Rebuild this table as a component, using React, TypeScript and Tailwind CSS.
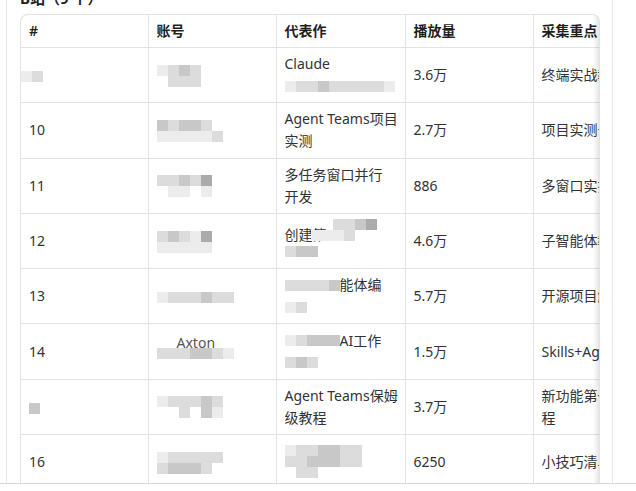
import React from "react";

// grey squares standing in for the mosaic-blurred bits of the screenshot
const shade: Record<string, string> = {
  ".": "bg-transparent",
  a: "bg-[#ececec]",
  b: "bg-[#dcdcdc]",
  c: "bg-[#c8c8c8]",
  d: "bg-[#ababab]",
};

const Pix = ({ rows, className = "" }: { rows: string[]; className?: string }) => (
  <div className={`inline-flex flex-col align-middle blur-[0.5px] ${className}`}>
    {rows.map((r, i) => (
      <div key={i} className="flex">
        {r.split("").map((ch, j) => (
          <span key={j} className={`h-[11px] w-[11px] ${shade[ch]}`} />
        ))}
      </div>
    ))}
  </div>
);

type Row = {
  no: React.ReactNode;
  account: React.ReactNode;
  work: React.ReactNode;
  plays: string;
  focus: React.ReactNode;
};

const rows: Row[] = [
  {
    no: <Pix rows={["ab"]} className="-ml-2" />,
    account: <Pix rows={["abcb", ".bbb"]} />,
    work: (
      <>
        <div>Claude</div>
        <div className="flex h-[22px] items-center">
          <Pix rows={["abbcbbbbba"]} className="rounded-full" />
        </div>
      </>
    ),
    plays: "3.6万",
    focus: "终端实战教程",
  },
  {
    no: "10",
    account: <Pix rows={["cbccb", "aaaaab"]} />,
    work: (
      <>
        <div>Agent Teams项目</div>
        <div>实测</div>
      </>
    ),
    plays: "2.7万",
    focus: "项目实测+拆解",
  },
  {
    no: "11",
    account: <Pix rows={["bbcbd", ".aa.a"]} />,
    work: (
      <>
        <div>多任务窗口并行</div>
        <div>开发</div>
      </>
    ),
    plays: "886",
    focus: "多窗口实操",
  },
  {
    no: "12",
    account: <Pix rows={["bcbad", "aaaaa"]} />,
    work: (
      <>
        <div className="flex items-center">
          <span className="-mb-[10px]">创建第</span>
          <Pix rows={["..bbcd", "aaab.."]} className="-ml-4" />
        </div>
        <div className="flex h-[22px] items-center">
          <Pix rows={["bcc"]} />
        </div>
      </>
    ),
    plays: "4.6万",
    focus: "子智能体教程",
  },
  {
    no: "13",
    account: <Pix rows={["abbbcbb"]} />,
    work: (
      <>
        <div className="flex items-center">
          <Pix rows={["bbbbc"]} />
          <span>能体编</span>
        </div>
        <div className="flex h-[22px] items-center">
          <Pix rows={["ab"]} />
        </div>
      </>
    ),
    plays: "5.7万",
    focus: "开源项目解读",
  },
  {
    no: "14",
    account: (
      <div className="relative inline-block w-[70px] align-middle">
        <span className="absolute left-[20px] -top-[9px] text-[#555]">Axton</span>
        <Pix rows={["bbbccba"]} />
      </div>
    ),
    work: (
      <>
        <div className="flex items-center">
          <Pix rows={["abccc"]} />
          <span>AI工作</span>
        </div>
        <div className="flex h-[22px] items-center">
          <Pix rows={["bcb"]} />
        </div>
      </>
    ),
    plays: "1.5万",
    focus: "Skills+Agent",
  },
  {
    no: <Pix rows={["c"]} />,
    account: <Pix rows={["abbbcb", "..b.ca"]} />,
    work: (
      <>
        <div>Agent Teams保姆</div>
        <div>级教程</div>
      </>
    ),
    plays: "3.7万",
    focus: (
      <>
        <div>新功能第一手教</div>
        <div>程</div>
      </>
    ),
  },
  {
    no: "16",
    account: <Pix rows={["abbbbb", "bcccb."]} />,
    work: <Pix rows={["abbccbb", "bbcccbb", ".bb.."]} />,
    plays: "6250",
    focus: "小技巧清单",
  },
];

const th =
  "border-r border-b border-[#e3e3e3] px-2 py-[5px] text-left font-semibold whitespace-nowrap text-[#1f1f1f]";
const td =
  "border-r border-b border-[#e3e3e3] px-2 py-[5.15px] align-middle whitespace-nowrap text-[#333]";

export default function App() {
  return (
    <div
      className="h-[491px] w-[636px] overflow-hidden bg-white text-[14px] leading-[22px]"
      style={{ fontFamily: "'Segoe UI', 'Noto Sans', 'Noto Sans CJK SC', sans-serif" }}
    >
      <div className="h-[484px] overflow-hidden border-b border-[#d9d9d9]">
        <div className="ml-[6px] flex h-full w-[607px] flex-col border-x border-[#e8e8e8] pl-[13px]">
          <div className="-mt-[12px] mb-[6px] h-[20px] shrink-0 text-[15px] font-bold leading-[20px] text-[#222]">
            B站（9 个）
          </div>
          <div className="relative w-[580px] shrink-0 overflow-hidden rounded-t-lg border border-b-0 border-[#e3e3e3]">
            <table className="w-[632px] table-fixed border-collapse">
              <colgroup>
                <col className="w-[127px]" />
                <col className="w-[128px]" />
                <col className="w-[129px]" />
                <col className="w-[128px]" />
                <col className="w-[120px]" />
              </colgroup>
              <thead>
                <tr>
                  <th className={th}>#</th>
                  <th className={th}>账号</th>
                  <th className={th}>代表作</th>
                  <th className={th}>播放量</th>
                  <th className={th}>采集重点</th>
                </tr>
              </thead>
              <tbody>
                {rows.map((r, i) => (
                  <tr key={i}>
                    <td className={`${td} h-[55px]`}>{r.no}</td>
                    <td className={td}>{r.account}</td>
                    <td className={td}>{r.work}</td>
                    <td className={td}>{r.plays}</td>
                    <td className={td}>{r.focus}</td>
                  </tr>
                ))}
              </tbody>
            </table>
            <div className="pointer-events-none absolute inset-y-0 right-0 w-[6px] bg-linear-to-l from-black/10 to-transparent" />
          </div>
        </div>
      </div>
    </div>
  );
}
